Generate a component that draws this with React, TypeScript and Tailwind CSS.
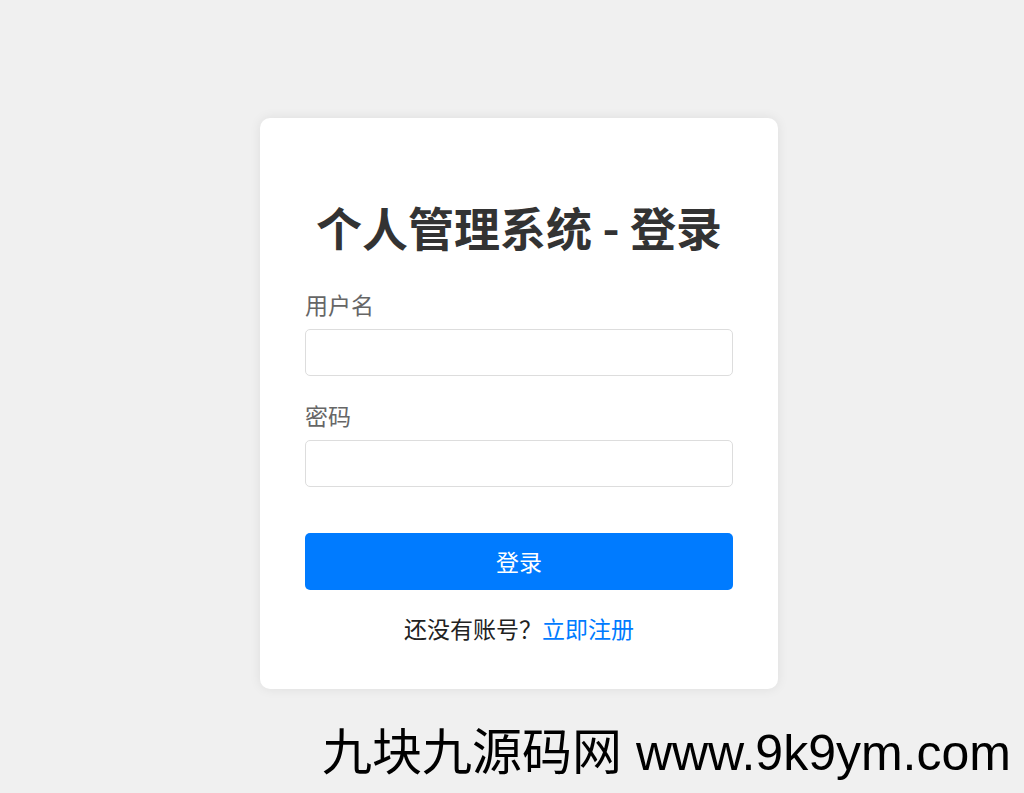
import React from "react";

export default function App() {
  return (
    <div
      className="relative min-h-[793px] w-full bg-[#f0f0f0] flex justify-center pl-[14px] pt-[118px] overflow-hidden"
      style={{ fontFamily: '"Noto Sans CJK SC", "Noto Sans", sans-serif' }}
    >
      <div className="w-[518px] h-[571px] self-start rounded-[10px] bg-white shadow-[0_0_12px_rgba(0,0,0,0.08)] px-[45px] pt-[80px] pb-[42px]">
        <h1 className="text-center text-[46px] leading-[56px] font-bold text-[#333]">
          个人管理系统 - 登录
        </h1>
        <div className="mt-[34px] flex flex-col">
          <label className="text-[23px] leading-[33px] text-[#666]">用户名</label>
          <input
            type="text"
            className="mt-[8px] h-[47px] w-full rounded-[5px] border border-[#ddd] bg-white px-3 outline-none"
          />
          <label className="mt-[23px] text-[23px] leading-[33px] text-[#666]">密码</label>
          <input
            type="password"
            className="mt-[8px] h-[47px] w-full rounded-[5px] border border-[#ddd] bg-white px-3 outline-none"
          />
          <button className="mt-[46px] h-[57px] w-full rounded-[5px] bg-[#007bff] text-[23px] text-white">
            登录
          </button>
          <p className="mt-[22px] text-center text-[23px] leading-[33px] text-[#222]">
            还没有账号？<a className="text-[#007bff]">立即注册</a>
          </p>
        </div>
      </div>
      <div
        className="absolute left-[322px] top-[718px] text-[50px] leading-[70px] text-black whitespace-nowrap"
        style={{ fontFamily: '"Liberation Sans", "Noto Sans CJK SC", sans-serif' }}
      >
        九块九源码网 www.9k9ym.com
      </div>
    </div>
  );
}
